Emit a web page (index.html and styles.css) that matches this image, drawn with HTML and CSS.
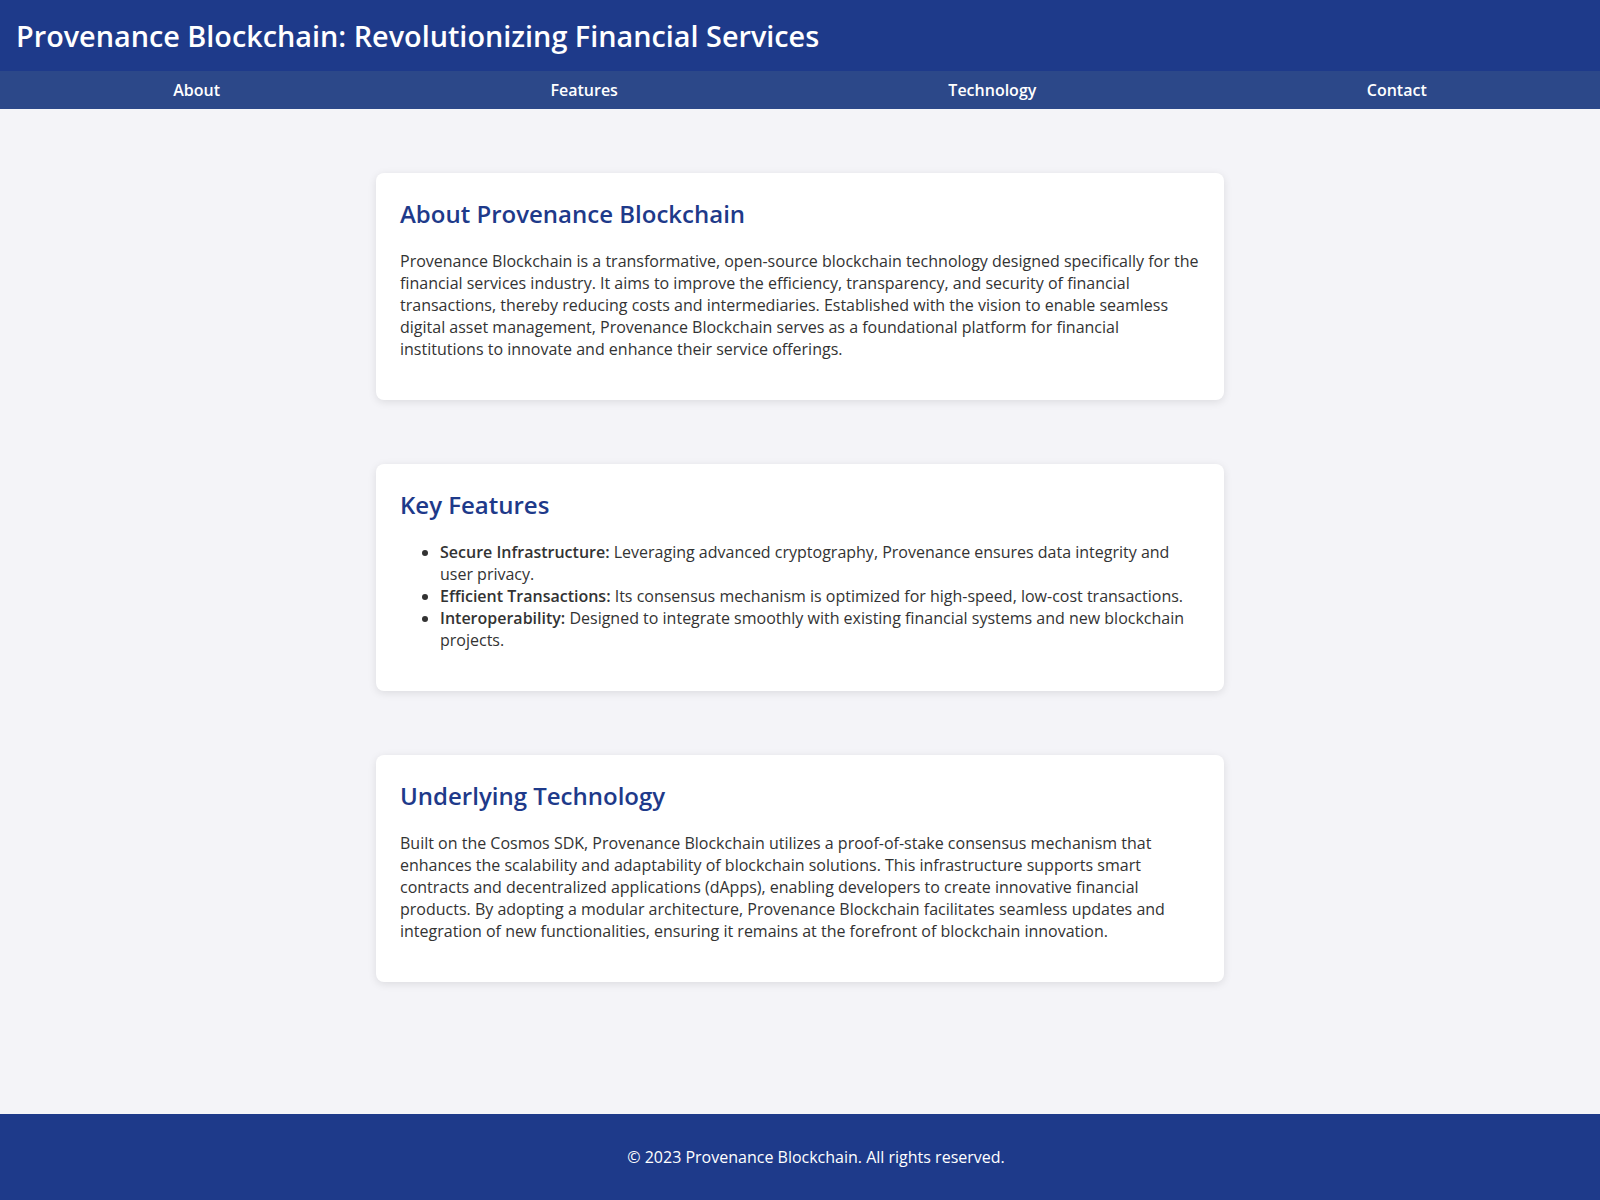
FILE: index.html
```html
<!DOCTYPE html>
<html lang="en">
<head>
    <meta charset="UTF-8">
    <meta name="viewport" content="width=device-width, initial-scale=1.0">
    <title>Provenance Blockchain</title>
    <link rel="stylesheet" href="styles.css">
</head>
<body>
    <header>
        <h1>Provenance Blockchain: Revolutionizing Financial Services</h1>
    </header>

    <nav>
        <a href="#about">About</a>
        <a href="#features">Features</a>
        <a href="#technology">Technology</a>
        <a href="#contact">Contact</a>
    </nav>

    <main>
        <section class="card" id="about">
            <h2>About Provenance Blockchain</h2>
            <p>Provenance Blockchain is a transformative, open-source blockchain technology designed specifically for the financial services industry. It aims to improve the efficiency, transparency, and security of financial transactions, thereby reducing costs and intermediaries. Established with the vision to enable seamless digital asset management, Provenance Blockchain serves as a foundational platform for financial institutions to innovate and enhance their service offerings.</p>
        </section>

        <section class="card" id="features">
            <h2>Key Features</h2>
            <ul>
                <li><strong>Secure Infrastructure:</strong> Leveraging advanced cryptography, Provenance ensures data integrity and user privacy.</li>
                <li><strong>Efficient Transactions:</strong> Its consensus mechanism is optimized for high-speed, low-cost transactions.</li>
                <li><strong>Interoperability:</strong> Designed to integrate smoothly with existing financial systems and new blockchain projects.</li>
            </ul>
        </section>

        <section class="card" id="technology">
            <h2>Underlying Technology</h2>
            <p>Built on the Cosmos SDK, Provenance Blockchain utilizes a proof-of-stake consensus mechanism that enhances the scalability and adaptability of blockchain solutions. This infrastructure supports smart contracts and decentralized applications (dApps), enabling developers to create innovative financial products. By adopting a modular architecture, Provenance Blockchain facilitates seamless updates and integration of new functionalities, ensuring it remains at the forefront of blockchain innovation.</p>
        </section>
    </main>

    <footer id="contact">
        <p>&copy; 2023 Provenance Blockchain. All rights reserved.</p>
    </footer>
</body>
</html>
```

FILE: styles.css
```css
body {
    font-family: "Open Sans", "Liberation Sans", sans-serif;
    background-color: #f4f4f8;
    color: #333;
    margin: 0;
    min-height: 100vh;
    display: flex;
    flex-direction: column;
}

header {
    background-color: #1e3a8a;
    color: white;
    padding: 16px;
}

header h1 {
    margin: 0;
    font-size: 1.8em;
    font-weight: 600;
}

nav {
    background-color: #2c4889;
    display: flex;
    justify-content: space-around;
    padding: 8px;
}

nav a {
    color: white;
    text-decoration: none;
    font-weight: 600;
}

main {
    flex: 1;
    padding: 32px 0;
}

.card {
    background-color: white;
    max-width: 800px;
    margin: 32px auto;
    padding: 24px;
    border-radius: 8px;
    box-shadow: 0 2px 8px rgba(0, 0, 0, 0.1);
}

.card + .card {
    margin-top: 64px;
}

.card h2 {
    color: #1e3a8a;
    margin-top: 0;
    font-weight: 600;
}

.card strong {
    font-weight: 600;
}

footer {
    background-color: #1e3a8a;
    color: white;
    text-align: center;
    padding: 16px 0 16px 32px;
}
```
